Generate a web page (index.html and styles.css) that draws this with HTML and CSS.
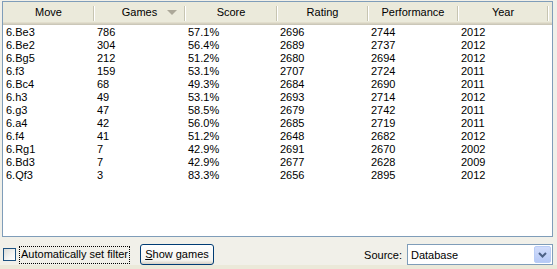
FILE: index.html
```html
<!DOCTYPE html>
<html>
<head>
<meta charset="utf-8">
<link rel="stylesheet" href="styles.css">
</head>
<body>
<div class="panel">
  <div class="frame">
    <div class="head">
      <div class="hc c1">Move</div>
      <div class="hc c2">Games<span class="sort"></span></div>
      <div class="hc c3">Score</div>
      <div class="hc c4">Rating</div>
      <div class="hc c5">Performance</div>
      <div class="hc c6">Year</div>
      <div class="hfill"></div>
    </div>
    <div class="rows">
      <div class="row"><span class="c1">6.Be3</span><span class="c2">786</span><span class="c3">57.1%</span><span class="c4">2696</span><span class="c5">2744</span><span class="c6">2012</span></div>
      <div class="row"><span class="c1">6.Be2</span><span class="c2">304</span><span class="c3">56.4%</span><span class="c4">2689</span><span class="c5">2737</span><span class="c6">2012</span></div>
      <div class="row"><span class="c1">6.Bg5</span><span class="c2">212</span><span class="c3">51.2%</span><span class="c4">2680</span><span class="c5">2694</span><span class="c6">2012</span></div>
      <div class="row"><span class="c1">6.f3</span><span class="c2">159</span><span class="c3">53.1%</span><span class="c4">2707</span><span class="c5">2724</span><span class="c6">2011</span></div>
      <div class="row"><span class="c1">6.Bc4</span><span class="c2">68</span><span class="c3">49.3%</span><span class="c4">2684</span><span class="c5">2690</span><span class="c6">2011</span></div>
      <div class="row"><span class="c1">6.h3</span><span class="c2">49</span><span class="c3">53.1%</span><span class="c4">2693</span><span class="c5">2714</span><span class="c6">2012</span></div>
      <div class="row"><span class="c1">6.g3</span><span class="c2">47</span><span class="c3">58.5%</span><span class="c4">2679</span><span class="c5">2742</span><span class="c6">2011</span></div>
      <div class="row"><span class="c1">6.a4</span><span class="c2">42</span><span class="c3">56.0%</span><span class="c4">2685</span><span class="c5">2719</span><span class="c6">2011</span></div>
      <div class="row"><span class="c1">6.f4</span><span class="c2">41</span><span class="c3">51.2%</span><span class="c4">2648</span><span class="c5">2682</span><span class="c6">2012</span></div>
      <div class="row"><span class="c1">6.Rg1</span><span class="c2">7</span><span class="c3">42.9%</span><span class="c4">2691</span><span class="c5">2670</span><span class="c6">2002</span></div>
      <div class="row"><span class="c1">6.Bd3</span><span class="c2">7</span><span class="c3">42.9%</span><span class="c4">2677</span><span class="c5">2628</span><span class="c6">2009</span></div>
      <div class="row"><span class="c1">6.Qf3</span><span class="c2">3</span><span class="c3">83.3%</span><span class="c4">2656</span><span class="c5">2895</span><span class="c6">2012</span></div>
    </div>
  </div>
  <div class="bar">
    <span class="check"></span>
    <span class="focus">Automatically set filter</span>
    <span class="btn"><u>S</u>how games</span>
    <span class="spacer"></span>
    <span class="srclabel">Source:</span>
    <span class="combo">
      <span class="ctext">Database</span>
      <span class="arrow"><svg width="9" height="6" viewBox="0 0 9 6"><path d="M1 1 L4.5 4.5 L8 1" fill="none" stroke="#4d6185" stroke-width="2"/></svg></span>
    </span>
  </div>
</div>
<div class="strip"></div>
</body>
</html>
```
FILE: styles.css
```css
html, body {
  margin: 0;
  padding: 0;
}
body {
  width: 557px;
  height: 269px;
  background: #f1f0e9;
  font-family: "Liberation Sans", Arial, sans-serif;
  font-size: 11px;
  color: #000;
  overflow: hidden;
}
.panel {
  padding: 1px 4px 0 2px;
  height: 265px;
  box-sizing: border-box;
  display: flex;
  flex-direction: column;
}
.frame {
  height: 236px;
  box-sizing: border-box;
  border: 1px solid #7f9db9;
  background: #fff;
  display: flex;
  flex-direction: column;
}
.head {
  display: flex;
  height: 23px;
  box-sizing: border-box;
  background: #ebeadb;
  border-bottom: 1px solid #cbc7b8;
  box-shadow: inset 0 -1px 0 #d6d2c2, inset 0 -2px 0 #e2decd;
}
.hc {
  position: relative;
  text-align: center;
  line-height: 21px;
  padding-top: 0;
  box-sizing: border-box;
}
.hc::after {
  content: "";
  position: absolute;
  right: 0;
  top: 4px;
  height: 15px;
  width: 1px;
  background: #c7c5b2;
  box-shadow: 1px 0 0 #fff;
}
.hfill { flex: 1; }
.c1 { width: 91px; }
.c2 { width: 91px; }
.c3 { width: 92px; }
.c4 { width: 91px; }
.c5 { width: 90px; }
.c6 { width: 90px; }
.sort {
  position: absolute;
  left: 73px;
  top: 8px;
  width: 0;
  height: 0;
  border-left: 5px solid transparent;
  border-right: 5px solid transparent;
  border-top: 5px solid #aca899;
}
.rows {
  padding-top: 1px;
}
.row {
  display: flex;
  height: 13px;
  line-height: 13px;
}
.row span {
  padding-left: 3px;
  box-sizing: border-box;
  white-space: nowrap;
}
.bar {
  display: flex;
  align-items: center;
  margin-top: 7px;
  height: 21px;
}
.check {
  width: 13px;
  height: 13px;
  box-sizing: border-box;
  border: 1px solid #1c5180;
  background: linear-gradient(135deg, #dcdcd7 0%, #f5f5f3 60%, #fff 100%);
  margin-left: 1px;
}
.focus {
  margin-left: 3px;
  padding: 2px 2px 3px 2px;
  outline: 1px dotted #000;
  outline-offset: -1px;
  line-height: 13px;
}
.btn {
  margin-left: 10px;
  width: 74px;
  height: 21px;
  box-sizing: border-box;
  border: 1px solid #003c74;
  border-radius: 3px;
  background: linear-gradient(#fefefe, #f4f4f0 80%, #d6d0c5);
  text-align: center;
  line-height: 19px;
}
.btn u { text-decoration: underline; }
.spacer { flex: 1; }
.srclabel {
  margin-right: 5px;
}
.combo {
  width: 146px;
  height: 21px;
  box-sizing: border-box;
  border: 1px solid #7f9db9;
  background: #fff;
  display: flex;
  align-items: center;
  padding: 1px;
}
.ctext {
  flex: 1;
  padding-left: 2px;
}
.arrow {
  width: 17px;
  height: 17px;
  box-sizing: border-box;
  border: 1px solid #b9cdf6;
  border-radius: 2px;
  background: linear-gradient(#d2ddfb, #b6c9f6);
  display: flex;
  align-items: center;
  justify-content: center;
}
.strip {
  height: 4px;
  background: #ebe9d9;
}
```
